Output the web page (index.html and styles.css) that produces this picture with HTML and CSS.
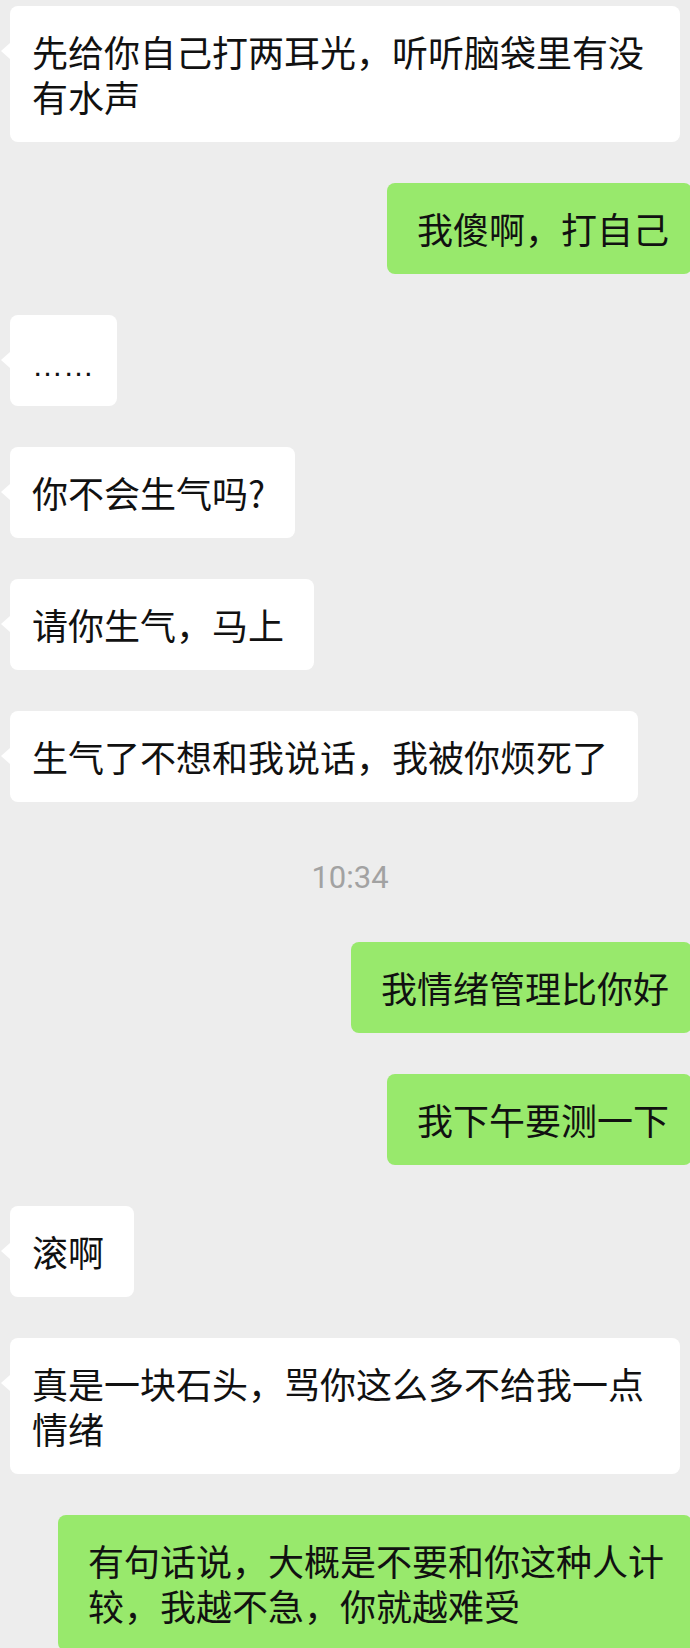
FILE: index.html
```html
<!DOCTYPE html>
<html lang="zh-CN">
<head>
    <meta charset="UTF-8">
    <meta name="viewport" content="width=device-width, initial-scale=1.0">
    <title>聊天记录</title>
    <link rel="stylesheet" href="styles.css">
</head>
<body>
    <div class="chat">
        <div class="msg left"><div class="bubble">先给你自己打两耳光，听听脑袋里有没有水声</div></div>
        <div class="msg right"><div class="bubble">我傻啊，打自己</div></div>
        <div class="msg left"><div class="bubble"><span class="dots">……</span></div></div>
        <div class="msg left"><div class="bubble">你不会生气吗?</div></div>
        <div class="msg left"><div class="bubble">请你生气，马上</div></div>
        <div class="msg left"><div class="bubble">生气了不想和我说话，我被你烦死了</div></div>
        <div class="time">10:34</div>
        <div class="msg right"><div class="bubble">我情绪管理比你好</div></div>
        <div class="msg right"><div class="bubble">我下午要测一下</div></div>
        <div class="msg left"><div class="bubble">滚啊</div></div>
        <div class="msg left"><div class="bubble">真是一块石头，骂你这么多不给我一点情绪</div></div>
        <div class="msg right"><div class="bubble">有句话说，大概是不要和你这种人计较，我越不急，你就越难受</div></div>
    </div>
</body>
</html>
```

FILE: styles.css
```css
* {
    margin: 0;
    padding: 0;
    box-sizing: border-box;
}

body {
    background-color: #ededed;
    font-family: "Noto Sans CJK SC", "Noto Sans", sans-serif;
    color: #111;
    overflow-x: hidden;
}

.chat {
    display: flex;
    flex-direction: column;
    gap: 41px;
    padding-top: 6px;
}

.msg {
    display: flex;
}

.msg.left {
    justify-content: flex-start;
    padding-left: 10px;
}

.msg.right {
    justify-content: flex-end;
    margin-right: -2px;
}

.bubble {
    position: relative;
    font-size: 36px;
    line-height: 45px;
    border-radius: 8px;
    word-break: break-all;
}

.left .bubble {
    background-color: #ffffff;
    max-width: 670px;
    padding: 23px 30px 23px 22px;
}

/* little arrow on the left side */
.left .bubble::before {
    content: "";
    position: absolute;
    left: -9px;
    top: 37px;
    border-top: 8px solid transparent;
    border-bottom: 8px solid transparent;
    border-right: 9px solid #ffffff;
}

.right .bubble {
    background-color: #98e96c;
    max-width: 634px;
    padding: 23px 23px 23px 30px;
}

.dots {
    font-family: "Liberation Sans", sans-serif;
    font-size: 31px;
    line-height: 20px;
    margin-right: -7px;
}

.time {
    text-align: center;
    font-family: Roboto, "Liberation Sans", sans-serif;
    font-size: 31px;
    line-height: 36px;
    color: #a2a2a2;
    padding: 17px 0 5px 10px;
}
```
